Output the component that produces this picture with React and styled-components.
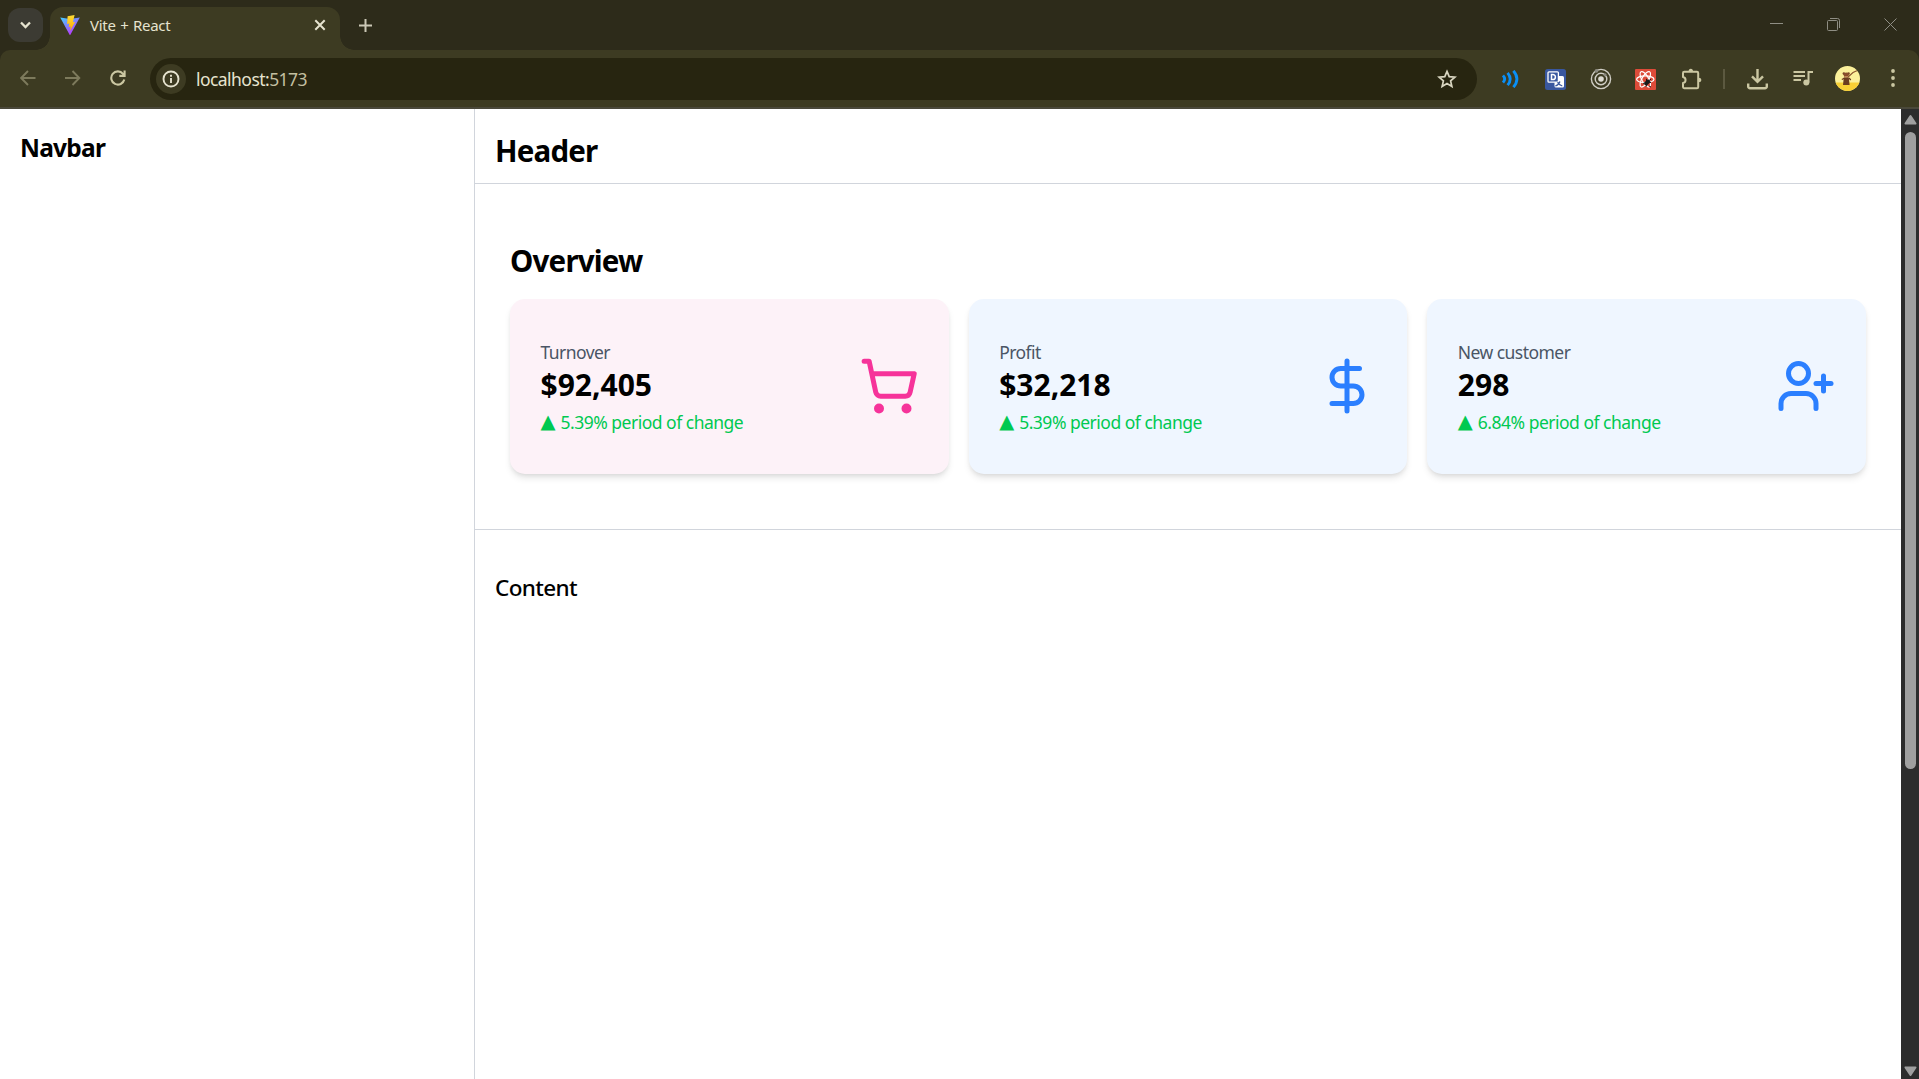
import React from "react";
import styled, { createGlobalStyle } from "styled-components";
import { ShoppingCart, DollarSign, UserPlus } from "lucide-react";

const GlobalStyle = createGlobalStyle`
  *, *::before, *::after { box-sizing: border-box; }
  html, body, #root { height: 100%; }
  body {
    margin: 0;
    overflow: hidden;
    background: #fff;
    color: #000;
    font-family: "Noto Sans", "Open Sans", sans-serif;
  }
  h1, h2, h3, p { margin: 0; }
  svg { display: block; flex: none; }
`;

const Window = styled.div`
  display: flex;
  flex-direction: column;
  height: 100vh;
  overflow: hidden;
`;

/* ---------- browser frame ---------- */

const TabStrip = styled.div`
  display: flex;
  align-items: flex-end;
  flex: none;
  height: 50px;
  background: #2d2b1a;
`;

const TabSearch = styled.div`
  display: grid;
  place-items: center;
  width: 35px;
  height: 34px;
  margin: 0 7px 8px 8px;
  border-radius: 12px;
  background: #3c3b33;
`;

const Tab = styled.div`
  position: relative;
  display: flex;
  align-items: center;
  width: 290px;
  height: 43px;
  padding: 0 11px 7px 10px;
  border-radius: 13px 13px 0 0;
  background: #3d3b22;

  &::before,
  &::after {
    content: "";
    position: absolute;
    bottom: 0;
    width: 14px;
    height: 14px;
  }
  &::before {
    left: -14px;
    background: radial-gradient(circle at 0 0, transparent 13.5px, #3d3b22 14px);
  }
  &::after {
    right: -14px;
    background: radial-gradient(circle at 100% 0, transparent 13.5px, #3d3b22 14px);
  }
`;

const TabTitle = styled.span`
  flex: 1;
  margin-left: 10px;
  color: #e6e3cf;
  font-size: 15px;
  line-height: 20px;
  letter-spacing: -0.3px;
  word-spacing: 1px;
`;

const NewTab = styled.div`
  display: grid;
  place-items: center;
  width: 35px;
  height: 34px;
  margin: 0 0 8px 8px;
`;

const WindowControls = styled.div`
  display: flex;
  align-self: stretch;
  margin-left: auto;
`;

const WindowButton = styled.div`
  display: grid;
  place-items: center;
  width: 57px;
  height: 49px;
`;

const ToolbarBack = styled.div`
  flex: none;
  background: #2d2b1a;
`;

const Toolbar = styled.div`
  display: flex;
  align-items: center;
  height: 59px;
  padding: 0 4px 1px 5px;
  border-bottom: 2px solid #4a483a;
  border-radius: 10px 10px 0 0 / 10px 10px 0 0;
  background: #3d3b22;
`;

const IconSlot = styled.div`
  display: grid;
  place-items: center;
  flex: none;
  width: ${(p) => p.$width || 45}px;
  height: 42px;
  color: ${(p) => p.$color || "#cbc7a2"};
`;

const Extensions = styled.div`
  display: flex;
  padding-top: 2px;
`;

const Omnibox = styled.div`
  display: flex;
  align-items: center;
  flex: 1;
  height: 42px;
  margin: 2px 11px 0 10px;
  padding: 0 20px 0 6px;
  border-radius: 21px;
  background: #272510;
  color: #e6e3cf;
`;

const SiteInfo = styled.div`
  display: grid;
  place-items: center;
  width: 30px;
  height: 30px;
  border-radius: 50%;
  background: #3d3b22;
`;

const Url = styled.span`
  flex: 1;
  margin-left: 10px;
  font-size: 17.5px;
  line-height: 24px;
  letter-spacing: -0.55px;
`;

const Port = styled.span`
  color: #c2bfa0;
`;

const Separator = styled.i`
  width: 2px;
  height: 20px;
  background: #5c5940;
`;

/* ---------- page ---------- */

const Viewport = styled.div`
  display: flex;
  flex: 1;
  min-height: 0;
`;

const Sidebar = styled.aside`
  flex: none;
  width: 475px;
  padding: 20px;
  border-right: 1px solid #d1d5dc;
`;

const Main = styled.main`
  flex: 1;
  display: flex;
  flex-direction: column;
`;

const Header = styled.header`
  height: 75px;
  padding: 20px;
  border-bottom: 1px solid #d1d5dc;
`;

const Section = styled.section`
  height: 346px;
  padding: 55px 35px 0;
  border-bottom: 1px solid #d1d5dc;
`;

const Content = styled.section`
  padding: 42px 20px;
`;

const NavTitle = styled.h2`
  font-size: 24.5px;
  line-height: 38px;
  font-weight: 700;
  letter-spacing: -0.75px;
`;

const Title = styled.h1`
  font-size: 29.5px;
  line-height: 43px;
  font-weight: 700;
  letter-spacing: -0.8px;
`;

const ContentTitle = styled.h3`
  font-size: 22.5px;
  line-height: 32px;
  font-weight: 500;
  letter-spacing: -0.65px;
`;

const Cards = styled.div`
  display: grid;
  grid-template-columns: repeat(3, 1fr);
  gap: 20px;
  margin-top: 17px;
`;

const Card = styled.article`
  display: flex;
  align-items: center;
  justify-content: space-between;
  height: 175px;
  padding: 0 30px 1px;
  border-radius: 15px;
  background: ${(p) => p.$background};
  color: ${(p) => p.$accent};
  box-shadow: 0 5px 7.5px -1px rgba(0, 0, 0, 0.1), 0 2.5px 5px -2.5px rgba(0, 0, 0, 0.1);
`;

const Summary = styled.div`
  padding-top: 3px;
  margin-left: 0.5px;
`;

const Label = styled.p`
  color: #4a5565;
  font-size: 17.5px;
  line-height: 25px;
  letter-spacing: -0.55px;
`;

const Value = styled.p`
  color: #000;
  font-size: 30px;
  line-height: 40px;
  font-weight: 700;
  letter-spacing: 0;
`;

const Change = styled.p`
  margin-top: 5px;
  color: #00c951;
  font-size: 17.5px;
  line-height: 25px;
  letter-spacing: -0.5px;
`;

const Marker = styled.span`
  display: inline-block;
  width: 20px;
  font-family: "DejaVu Sans", sans-serif;
  font-size: 19.5px;
  line-height: 20px;
  vertical-align: 1px;
`;

const Scrollbar = styled.div`
  display: flex;
  flex-direction: column;
  align-items: center;
  flex: none;
  width: 18px;
  padding: 5px 0 2px 1px;
  background: #2c2c2c;
`;

const Thumb = styled.div`
  width: 11px;
  height: 637px;
  margin-top: 7px;
  margin-bottom: auto;
  border-radius: 6px;
  background: #9f9f9f;
`;

/* ---------- drawings ---------- */

const Line = ({ w = 20, h = w, box, sw = 2, children, ...rest }) => (
  <svg width={w} height={h} viewBox={box || `0 0 ${w} ${h}`} fill="none" stroke="currentColor" strokeWidth={sw} {...rest}>
    {children}
  </svg>
);

const ViteLogo = () => (
  <svg width="20" height="20" viewBox="0 0 20 20">
    <defs>
      <linearGradient id="vite" x1="0" y1="0" x2="0.6" y2="1">
        <stop offset="0" stopColor="#41d1ff" />
        <stop offset="1" stopColor="#bd34fe" />
      </linearGradient>
      <linearGradient id="bolt" x1="0" y1="0" x2="0" y2="1">
        <stop offset="0" stopColor="#ffdd35" />
        <stop offset="1" stopColor="#ffa800" />
      </linearGradient>
    </defs>
    <path d="M0.2 2.4 L10 4 L19.8 2.4 L10.4 19.7 Q10 20.2 9.6 19.7 Z" fill="url(#vite)" />
    <path d="M14.6 0 L7.6 1.3 L7.1 9 L9.3 8.6 L8.7 12 L10.6 11.5 L10.1 16 L15.2 6.8 L12.9 7.2 Z" fill="url(#bolt)" />
  </svg>
);

const WavesIcon = () => (
  <Line w={18} sw={2.8} stroke="#0a8ff5">
    <path d="M1 5.400 Q4.400 9 1 12.600" />
    <path d="M5.600 2.800 Q10.800 9 5.600 15.200" />
    <path d="M11.400 .8 Q18.400 9 11.400 17.200" />
  </Line>
);

const TranslateIcon = () => (
  <svg width="21" height="21" viewBox="0 0 21 21">
    <rect width="21" height="21" rx="2.5" fill="#39579f" />
    <rect x="9.5" y="7" width="9.5" height="11.5" rx="1.5" fill="#fff" />
    <rect x="3" y="2.8" width="10.4" height="10.4" rx="1" fill="#39579f" stroke="#fff" strokeWidth="1.3" />
    <path d="M6.5 5.400h1.300a2.600 2.600 0 0 1 0 5.200H6.500z" fill="none" stroke="#fff" strokeWidth="1.500" />
    <path d="M10.300 17c2.500-.8 4-2.700 4.600-4.500M12.500 13.400c1.200 2 2.800 3 4.800 3.600" fill="none" stroke="#39579f" strokeWidth="1.300" />
  </svg>
);

const TargetIcon = () => (
  <Line w={22} sw={1.4} stroke="#cfcdc4">
    <circle cx="11" cy="11" r="9.600" />
    <circle cx="11" cy="11" r="5.800" />
    <circle cx="11" cy="11" r="2.800" fill="#dedcd4" stroke="none" />
    <circle cx="6.500" cy="2.800" r="1.900" fill="#8b8a80" stroke="none" />
    <circle cx="15" cy="6.800" r="1.600" fill="#8b8a80" stroke="none" />
  </Line>
);

const ReactBugIcon = () => (
  <svg width="21" height="21" viewBox="0 0 21 21">
    <rect width="21" height="21" rx="1" fill="#dd4b39" />
    <g fill="none" stroke="#fff" strokeWidth="1.200">
      <ellipse cx="10.300" cy="10.300" rx="8.700" ry="3.400" />
      <ellipse cx="10.300" cy="10.300" rx="8.700" ry="3.400" transform="rotate(60 10.300 10.300)" />
      <ellipse cx="10.300" cy="10.300" rx="8.700" ry="3.400" transform="rotate(120 10.300 10.300)" />
    </g>
    <g fill="#1a1a1a" stroke="#1a1a1a">
      <ellipse cx="12.200" cy="13.500" rx="1.900" ry="3.300" strokeWidth=".5" transform="rotate(45 12.200 13.500)" />
      <path d="M11.500 9.800v3l4.500.8M8 14.500l3-1M11 17.800l1-3M14 17l2 1M14.500 11l1.500-.8" fill="none" strokeWidth="1" />
    </g>
  </svg>
);

const PuzzleIcon = () => (
  <Line w={22} sw={2} strokeLinejoin="round">
    <path d="M4.200 3.800H17a1.200 1.200 0 0 1 1.200 1.200V19a1.200 1.200 0 0 1-1.200 1.200H4.200A1.300 1.300 0 0 1 3 19v-4c3.400-.6 3.400-5.500 0-6.100V5a1.200 1.200 0 0 1 1.200-1.200z" />
    <path d="M8.600 3.600a2.200 2.800 0 0 1 4.400 0zM18.500 9.800a2.800 2.200 0 0 1 0 4.400z" fill="currentColor" stroke="none" />
  </Line>
);

const DownloadIcon = () => (
  <Line w={22} sw={2.400}>
    <path d="M10.500 1v12.500M5 8.300l5.500 5.500 5.500-5.500" />
    <path d="M1.200 15.500v3a1.800 1.800 0 0 0 1.800 1.800h15a1.800 1.800 0 0 0 1.800-1.800v-3" />
  </Line>
);

const QueueIcon = () => (
  <Line w={20} h={18} sw={2}>
    <path d="M0.500 3h11.500M0.500 7h11.500M0.500 11h7.500" />
    <path d="M15.500 13.500V3h4.500" />
    <circle cx="13.300" cy="13.600" r="3" fill="currentColor" stroke="none" />
  </Line>
);

const Avatar = () => (
  <svg width="25" height="25" viewBox="0 0 25 25">
    <clipPath id="face"><circle cx="12.500" cy="12.500" r="12.500" /></clipPath>
    <g clipPath="url(#face)">
      <rect width="25" height="25" fill="#fbf09a" />
      <rect y="16.500" width="25" height="9" fill="#f8cf35" />
      <path d="M12.500 11.500 18 6.500 24 3.800" stroke="#8a552d" strokeWidth="1.100" fill="none" />
      <circle cx="8.900" cy="7.600" r="1.300" fill="#7a4526" />
      <circle cx="13.500" cy="7.600" r="1.300" fill="#7a4526" />
      <circle cx="11.200" cy="9" r="2.500" fill="#8a4d2b" />
      <path d="M8.800 11.500h5l.8 7.500H8z" fill="#6b3b20" />
      <path d="M6.800 13.500l3-1.500M14 12l1.800 2" stroke="#6b3b20" strokeWidth="1.200" />
      <path d="M9.300 10.600h3.800" stroke="#c98d5c" />
    </g>
  </svg>
);

const Arrow = ({ down }) => (
  <svg width="13" height="11" viewBox="0 0 13 11" transform={down ? "rotate(180)" : undefined}>
    <path d="M6.500 2 11.500 9.600H1.500z" fill="#9f9f9f" stroke="#9f9f9f" strokeWidth="2" strokeLinejoin="round" />
  </svg>
);

/* ---------- content ---------- */

const stats = [
  { label: "Turnover", value: "$92,405", change: "5.39%", Icon: ShoppingCart, background: "#fdf2f8", accent: "#f6339a" },
  { label: "Profit", value: "$32,218", change: "5.39%", Icon: DollarSign, background: "#eff6ff", accent: "#2b7fff" },
  { label: "New customer", value: "298", change: "6.84%", Icon: UserPlus, background: "#eff6ff", accent: "#2b7fff" },
];

export default function App() {
  return (
    <Window>
      <GlobalStyle />
      <TabStrip>
        <TabSearch>
          <Line w={11} h={8} sw={2.300} stroke="#e6e3cf"><path d="M1 1.500 5.500 6 10 1.500" /></Line>
        </TabSearch>
        <Tab>
          <ViteLogo />
          <TabTitle>Vite + React</TabTitle>
          <Line w={18} sw={2} stroke="#e6e3cf"><path d="M4.300 4.300l9.400 9.400M13.700 4.300l-9.400 9.400" /></Line>
        </Tab>
        <NewTab>
          <Line w={13} sw={2} stroke="#cbc8b6"><path d="M6.500 0v13M0 6.500h13" /></Line>
        </NewTab>
        <WindowControls>
          <WindowButton><Line w={13} sw={1} stroke="#8f8e84"><path d="M0 5.500h13" /></Line></WindowButton>
          <WindowButton>
            <Line w={13} sw={1} stroke="#8f8e84">
              <rect x=".5" y="2.500" width="10" height="10" rx="1" />
              <path d="M3 .5h7.500a2 2 0 0 1 2 2V10" />
            </Line>
          </WindowButton>
          <WindowButton><Line w={13} sw={1} stroke="#8f8e84"><path d="M.5.5l12 12M12.500.5l-12 12" /></Line></WindowButton>
        </WindowControls>
      </TabStrip>

      <ToolbarBack>
        <Toolbar>
          <IconSlot $color="#7d7a5c"><Line w={16} sw={1.900}><path d="M15.500 8H1.500M8 1 1.200 8 8 15" /></Line></IconSlot>
          <IconSlot $color="#7d7a5c"><Line w={16} sw={1.900}><path d="M0 8h14M7.500 1l6.800 7-6.800 7" /></Line></IconSlot>
          <IconSlot>
            <Line w={16} sw={2.100}><path d="M14.300 9.500A6.600 6.600 0 1 1 13 3.800L14.500 5.500M14.600.5v5.400H9.300" /></Line>
          </IconSlot>
          <Omnibox>
            <SiteInfo>
              <Line w={18} sw={1.900}><circle cx="9" cy="9" r="7.500" /><path d="M9 8v5M9 4.800v1.900" /></Line>
            </SiteInfo>
            <Url>localhost:<Port>5173</Port></Url>
            <Line w={20} sw={1.700} stroke="#d8d5c0">
              <path d="M10 2.400l2.200 5.300 5.700.5-4.300 3.700 1.300 5.600-4.900-3-4.900 3 1.300-5.600L2.100 8.200l5.700-.5z" />
            </Line>
          </Omnibox>
          <Extensions>
            <IconSlot><WavesIcon /></IconSlot>
            <IconSlot><TranslateIcon /></IconSlot>
            <IconSlot><TargetIcon /></IconSlot>
            <IconSlot><ReactBugIcon /></IconSlot>
            <IconSlot><PuzzleIcon /></IconSlot>
            <IconSlot $width={22}><Separator /></IconSlot>
            <IconSlot><DownloadIcon /></IconSlot>
          </Extensions>
          <IconSlot><QueueIcon /></IconSlot>
          <IconSlot><Avatar /></IconSlot>
          <IconSlot>
            <svg width="4" height="18" viewBox="0 0 4 18" fill="currentColor">
              <circle cx="2" cy="2" r="1.900" /><circle cx="2" cy="9" r="1.900" /><circle cx="2" cy="16" r="1.900" />
            </svg>
          </IconSlot>
        </Toolbar>
      </ToolbarBack>

      <Viewport>
        <Sidebar>
          <NavTitle>Navbar</NavTitle>
        </Sidebar>
        <Main>
          <Header><Title>Header</Title></Header>
          <Section>
            <Title>Overview</Title>
            <Cards>
              {stats.map(({ label, value, change, Icon, background, accent }) => (
                <Card key={label} $background={background} $accent={accent}>
                  <Summary>
                    <Label>{label}</Label>
                    <Value>{value}</Value>
                    <Change><Marker>▲</Marker>{change} period of change</Change>
                  </Summary>
                  <Icon size={60} />
                </Card>
              ))}
            </Cards>
          </Section>
          <Content><ContentTitle>Content</ContentTitle></Content>
        </Main>
        <Scrollbar>
          <Arrow />
          <Thumb />
          <Arrow down />
        </Scrollbar>
      </Viewport>
    </Window>
  );
}
